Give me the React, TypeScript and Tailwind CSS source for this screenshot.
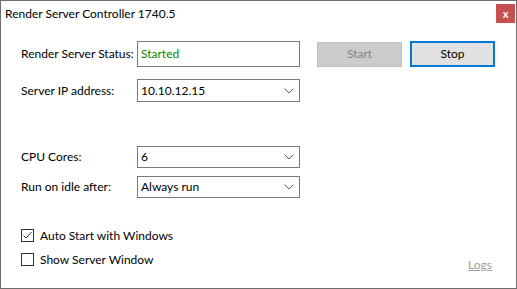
const Chevron = () => (
  <svg width="10" height="6" viewBox="0 0 10 6" className="absolute right-[5px] top-1/2 -translate-y-1/2">
    <polyline points="0.5,0.5 5,5 9.5,0.5" fill="none" stroke="#5a5a5a" strokeWidth="1" />
  </svg>
);

const Select = ({ value, h }: { value: string; h: string }) => (
  <div className={`relative w-[163px] ${h} border border-[#7a7a7a] bg-white flex items-center pl-[3px]`}>
    <span>{value}</span>
    <Chevron />
  </div>
);

const CheckBox = ({ checked, label }: { checked?: boolean; label: string }) => (
  <div className="flex items-center h-[13px]">
    <div className="w-[13px] h-[13px] border border-[#333333] bg-white flex items-center justify-center">
      {checked && (
        <svg width="11" height="11" viewBox="0 0 11 11">
          <polyline points="1.5,5.5 4,8 9.5,2" fill="none" stroke="#333333" strokeWidth="1" />
        </svg>
      )}
    </div>
    <span className="ml-[6px]">{label}</span>
  </div>
);

export default function App() {
  return (
    <div
      className="w-[517px] h-[289px] bg-white border border-[#6e6e6e] flex flex-col text-[12px] text-black"
      style={{ fontFamily: 'Lato, "Liberation Sans", Arial, sans-serif' }}
    >
      {/* Title bar */}
      <div className="h-[28px] flex items-start justify-between">
        <span className="ml-[4px] mt-[5px] leading-[16px]">Render Server Controller 1740.5</span>
        <button className="w-[19px] h-[19px] mt-[3px] mr-[1px] bg-[#c75050] text-white text-[11px] font-bold leading-none flex items-center justify-center">
          x
        </button>
      </div>

      <div className="flex flex-col pl-[20px]">
        {/* Status */}
        <div className="flex items-center mt-[12px] h-[26px]">
          <span className="w-[116px] whitespace-nowrap">Render Server Status:</span>
          <div className="w-[163px] h-[26px] border border-[#7a7a7a] flex items-center pl-[3px] text-[#008a00]">
            Started
          </div>
          <button className="ml-[17px] w-[85px] h-[25px] bg-[#cccccc] border border-[#bfbfbf] text-[#838383]">
            Start
          </button>
          <button className="ml-[8px] w-[85px] h-[26px] bg-[#e1e1e1] border-2 border-[#0078d7]">
            Stop
          </button>
        </div>

        {/* IP */}
        <div className="flex items-center mt-[12px]">
          <span className="w-[116px]">Server IP address:</span>
          <Select value="10.10.12.15" h="h-[23px]" />
        </div>

        {/* CPU */}
        <div className="flex items-center mt-[44px]">
          <span className="w-[116px]">CPU Cores:</span>
          <Select value="6" h="h-[22px]" />
        </div>

        <div className="flex items-center mt-[8px]">
          <span className="w-[116px]">Run on idle after:</span>
          <Select value="Always run" h="h-[22px]" />
        </div>

        <div className="mt-[31px]">
          <CheckBox checked label="Auto Start with Windows" />
        </div>
        <div className="mt-[11px] flex items-start justify-between pr-[24px]">
          <CheckBox label="Show Server Window" />
          <a className="text-[#a0a0a0] underline mt-[3px]">Logs</a>
        </div>
      </div>
    </div>
  );
}
